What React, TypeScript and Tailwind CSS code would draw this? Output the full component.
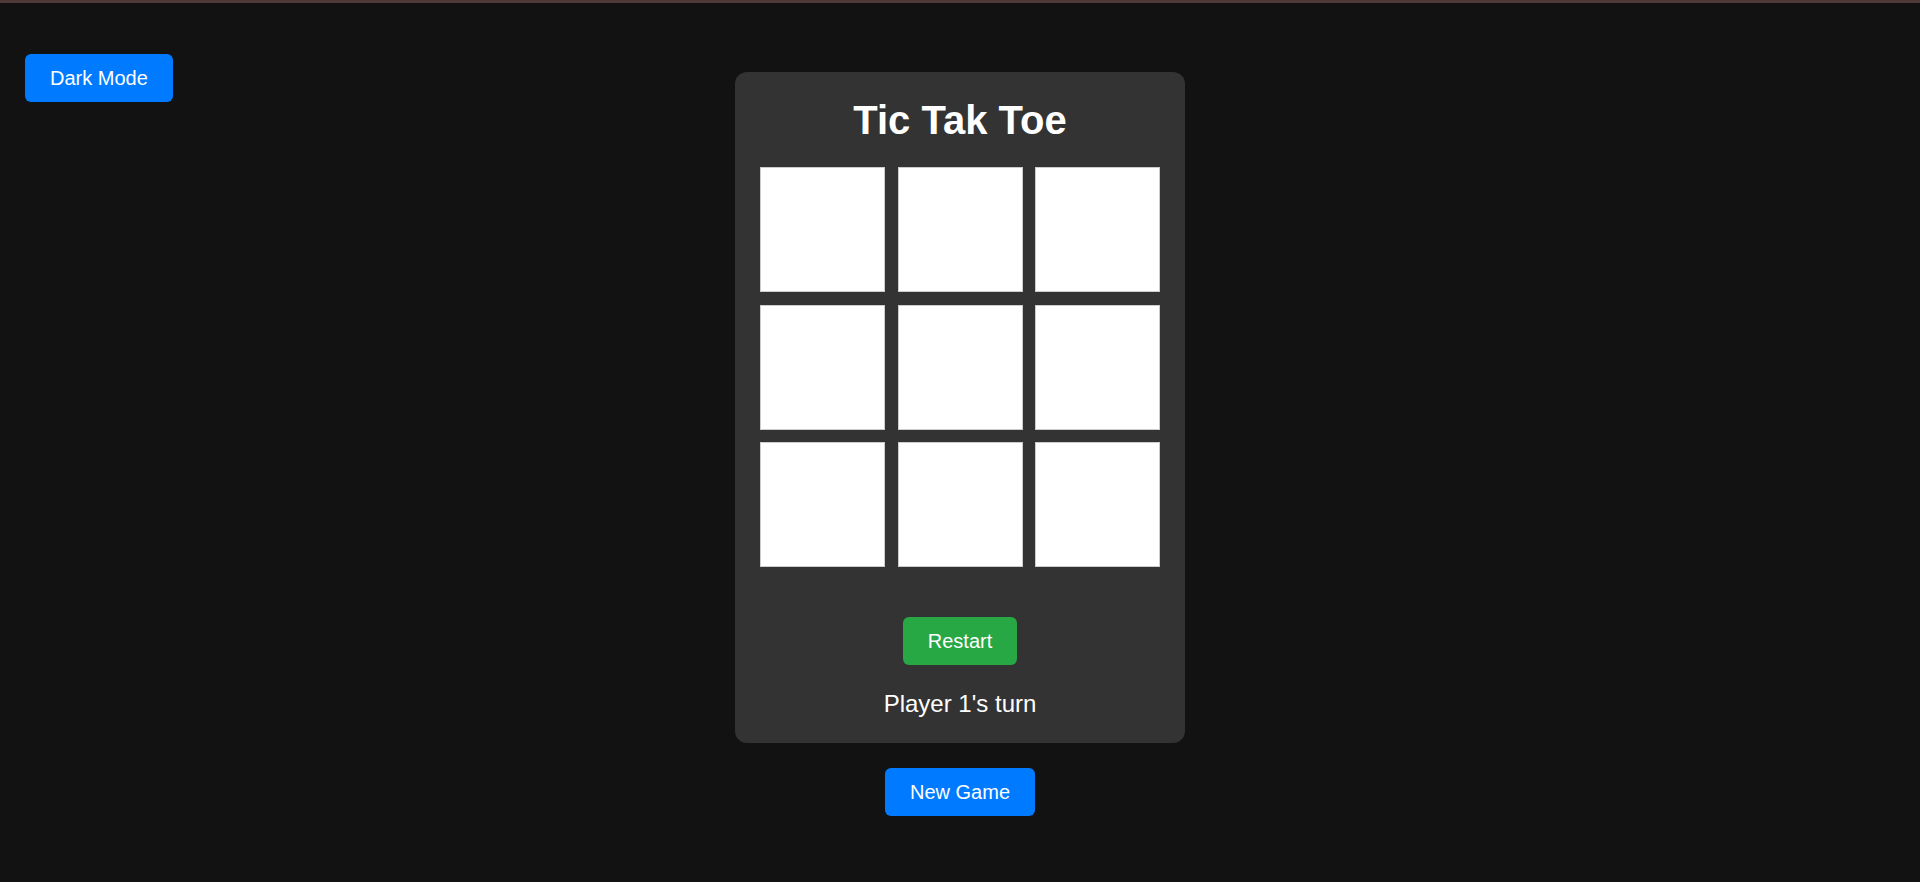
import React, { useState } from 'react';

const font = { fontFamily: '"Liberation Sans", Arial, sans-serif' };

export default function App() {
    const [board, setBoard] = useState<(string | null)[]>(Array(9).fill(null));
    const [player, setPlayer] = useState(1);

    const play = (i: number) => {
        if (board[i]) return;
        const next = [...board];
        next[i] = player === 1 ? 'X' : 'O';
        setBoard(next);
        setPlayer(player === 1 ? 2 : 1);
    };

    const restart = () => {
        setBoard(Array(9).fill(null));
        setPlayer(1);
    };

    return (
        <div className="relative min-h-[882px] bg-[#121212] text-white" style={font}>
            <div className="h-[3px] bg-[#4f3a37]" />

            <button className="absolute left-[25px] top-[54px] h-[48px] px-[25px] rounded-[6px] bg-[#007bff] text-[20px] text-white">
                Dark Mode
            </button>

            <div className="flex flex-col items-center pt-[69px]">
                <div className="w-[450px] bg-[#333333] rounded-[12px] p-[25px] flex flex-col items-center">
                    <h1 className="text-[40px] leading-[46px] font-bold mb-[24px]">Tic Tak Toe</h1>

                    <div className="grid grid-cols-3 gap-[12.5px] w-[400px]">
                        {board.map((cell, i) => (
                            <button
                                key={i}
                                onClick={() => play(i)}
                                className="h-[125px] bg-white border border-[#cccccc] text-black text-[48px] font-bold flex items-center justify-center"
                            >
                                {cell}
                            </button>
                        ))}
                    </div>

                    <button
                        onClick={restart}
                        className="mt-[50px] h-[48px] px-[25px] rounded-[6px] bg-[#28a745] text-[20px] text-white"
                    >
                        Restart
                    </button>

                    <p className="mt-[25px] text-[24px] leading-[28px]">Player {player}'s turn</p>
                </div>

                <button
                    onClick={restart}
                    className="mt-[25px] h-[48px] px-[25px] rounded-[6px] bg-[#007bff] text-[20px] text-white"
                >
                    New Game
                </button>
            </div>
        </div>
    );
}
